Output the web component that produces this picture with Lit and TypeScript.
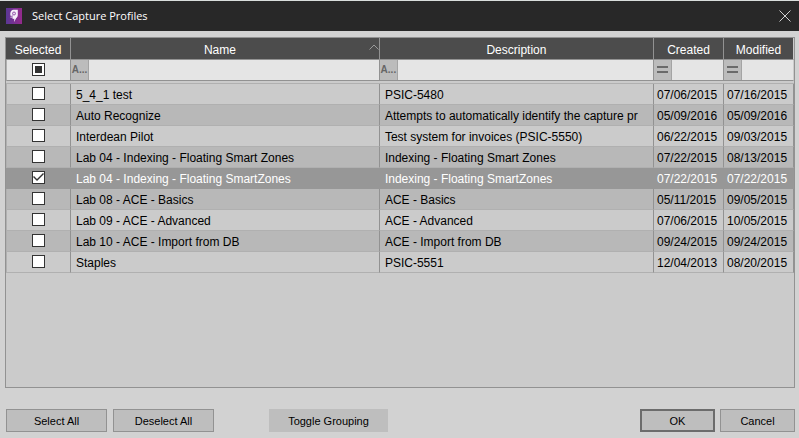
import { LitElement, html, css, svg, nothing } from "lit";
import { customElement, state } from "lit/decorators.js";
import { classMap } from "lit/directives/class-map.js";

interface Profile {
  name: string;
  description: string;
  created: string;
  modified: string;
  selected?: boolean;
}

const PROFILES: Profile[] = [
  { name: "5_4_1 test", description: "PSIC-5480", created: "07/06/2015", modified: "07/16/2015" },
  { name: "Auto Recognize", description: "Attempts to automatically identify the capture pr", created: "05/09/2016", modified: "05/09/2016" },
  { name: "Interdean Pilot", description: "Test system for invoices (PSIC-5550)", created: "06/22/2015", modified: "09/03/2015" },
  { name: "Lab 04 - Indexing - Floating Smart Zones", description: "Indexing - Floating Smart Zones", created: "07/22/2015", modified: "08/13/2015" },
  { name: "Lab 04 - Indexing - Floating SmartZones", description: "Indexing - Floating SmartZones", created: "07/22/2015", modified: "07/22/2015", selected: true },
  { name: "Lab 08 - ACE - Basics", description: "ACE - Basics", created: "05/11/2015", modified: "09/05/2015" },
  { name: "Lab 09 - ACE - Advanced", description: "ACE - Advanced", created: "07/06/2015", modified: "10/05/2015" },
  { name: "Lab 10 - ACE - Import from DB", description: "ACE - Import from DB", created: "09/24/2015", modified: "09/24/2015" },
  { name: "Staples", description: "PSIC-5551", created: "12/04/2013", modified: "08/20/2015" },
];

@customElement("app-root")
export class AppRoot extends LitElement {
  static styles = css`
    :host {
      display: flex;
      flex-direction: column;
      min-height: 100vh;
      box-sizing: border-box;
      border-top: 1px solid #d9dedc;
      background: #d2d2d2;
      color: #000;
      font: 12px/16px "Liberation Sans", Arial, sans-serif;
    }
    * {
      box-sizing: border-box;
    }
    button,
    input {
      font: inherit;
      color: inherit;
      margin: 0;
      padding: 0;
      border-radius: 0;
    }
    .titlebar {
      display: flex;
      align-items: center;
      gap: 10px;
      height: 30px;
      padding: 0 6px;
      background: #282828;
      color: #fff;
    }
    .logo {
      display: block;
      width: 16px;
      height: 16px;
    }
    .title {
      flex: 1;
      margin: 0;
      font: 11px/16px "Open Sans", "Noto Sans", sans-serif;
    }
    .close {
      display: grid;
      place-items: center;
      width: 16px;
      height: 16px;
      border: 0;
      background: none;
    }
    .close svg {
      width: 12px;
      height: 12px;
    }
    .grid {
      flex: 1;
      margin: 6px 4px 0 5px;
      border: 1px solid #929292;
      background: #cbcbcb;
    }
    table {
      width: 100%;
      table-layout: fixed;
      border-collapse: separate;
      border-spacing: 0;
    }
    .col-selected {
      width: 65px;
    }
    .col-name {
      width: 39.2%;
    }
    .col-date {
      width: 70px;
    }
    th,
    td {
      padding: 0;
      height: 21px;
      border-right: 1px solid #929292;
      border-bottom: 1px solid #b0b0b0;
      overflow: hidden;
      white-space: nowrap;
      text-align: left;
      font-weight: normal;
      vertical-align: middle;
    }
    th {
      height: 22px;
      background: #4c4c4c;
      border-bottom-color: #929292;
      color: #fff;
      text-align: center;
    }
    .head {
      display: flex;
      align-items: flex-start;
      justify-content: center;
      padding-top: 3px;
    }
    .head-label {
      flex: 1;
    }
    .sort {
      width: 10px;
      height: 10px;
    }
    th:last-child,
    .filters td:last-child {
      border-right-color: #cbcbcb;
    }
    .filters td {
      background: #e5e5e5;
      border-bottom-color: #929292;
    }
    .filter {
      display: flex;
      height: 20px;
    }
    .op {
      display: grid;
      place-items: center;
      flex: none;
      width: 18px;
      padding-bottom: 1px;
      border: 0;
      border-right: 1px solid #a4a4a4;
      background: #bcbcbc;
      color: #666;
      font: bold 10px/16px "Liberation Sans", sans-serif;
    }
    .op svg {
      width: 11px;
      height: 7px;
    }
    .filter input {
      flex: 1;
      min-width: 0;
      border: 0;
      background: none;
      outline: none;
    }
    .spacer td {
      height: 3px;
      border-right: 0;
      line-height: 0;
    }
    .row td {
      padding: 1px 0 0 5px;
      background: #cbcbcb;
    }
    .row.alt td {
      background: #b8b8b8;
    }
    .row.active td {
      background: #979797;
      border-color: #979797;
      color: #fff;
    }
    .row .date {
      padding-left: 3px;
    }
    .row .pick,
    .filters .pick {
      padding: 0 0 1px;
      border-left: 1px solid #b0b0b0;
    }
    .check {
      appearance: none;
      display: grid;
      place-items: center;
      width: 13px;
      height: 13px;
      margin: 0 auto;
      border: 1px solid #333;
      background: #fff;
    }
    .check:checked::before {
      content: "";
      width: 11px;
      height: 11px;
      background: #333;
      clip-path: polygon(0 5px, 1px 4px, 4px 7px, 10px 1px, 11px 2px, 4px 9px);
    }
    .check:indeterminate::before {
      content: "";
      width: 7px;
      height: 7px;
      background: #333;
    }
    .footer {
      display: flex;
      justify-content: space-between;
      padding: 21px 4px 6px 6px;
    }
    .tools {
      display: flex;
      gap: 6px;
    }
    .actions {
      display: flex;
      gap: 5px;
    }
    .btn {
      width: 101px;
      height: 23px;
      border: 1px solid #929292;
      background: #bebebe;
      font-size: 11px;
    }
    .toggle {
      width: 119px;
      margin-left: 49px;
      border-color: #bebebe;
    }
    .short {
      width: 75px;
    }
    .ok {
      border: 2px solid #6c6c6c;
    }
  `;

  @state() private profiles = PROFILES;

  private toggle(index: number) {
    this.profiles = this.profiles.map((p, i) => (i === index ? { ...p, selected: !p.selected } : p));
  }

  private selectAll(selected: boolean) {
    this.profiles = this.profiles.map((p) => ({ ...p, selected }));
  }

  private renderFilter(label: string, kind: "text" | "date") {
    const equals = svg`<path d="M0 1h11M0 6h11" stroke="#6a6a6a" stroke-width="2" />`;
    return html`<td>
      <div class="filter">
        <button class="op" aria-label="${label} filter operator">
          ${kind === "text" ? "A..." : html`<svg viewBox="0 0 11 7">${equals}</svg>`}
        </button>
        <input type="text" aria-label="Filter by ${label}" />
      </div>
    </td>`;
  }

  private renderRow(p: Profile, i: number) {
    const active = i === 4;
    return html`<tr class=${classMap({ row: true, alt: i % 2 === 1, active })}>
      <td class="pick">
        <input class="check" type="checkbox" aria-label=${p.name} .checked=${!!p.selected} @change=${() => this.toggle(i)} />
      </td>
      <td>${p.name}</td>
      <td>${p.description}</td>
      <td class="date">${p.created}</td>
      <td class="date">${p.modified}</td>
    </tr>`;
  }

  private renderHead(label: string, sorted = false) {
    return html`<th scope="col" aria-sort=${sorted ? "ascending" : nothing}>
      <div class="head">
        <span class="head-label">${label}</span>
        ${sorted
          ? html`<svg class="sort" viewBox="0 0 10 10"><path d="M.5 7.500 5 3l4.500 4.500" fill="none" stroke="#9a9a9a" /></svg>`
          : nothing}
      </div>
    </th>`;
  }

  render() {
    const all = this.profiles.every((p) => p.selected);
    const some = this.profiles.some((p) => p.selected);
    return html`
      <header class="titlebar">
        <svg class="logo" viewBox="0 0 16 16" aria-hidden="true">
          <defs>
            <linearGradient id="brand" x1="0" y1="0" x2="1" y2="0">
              <stop offset="0" stop-color="#5a3795" />
              <stop offset="1" stop-color="#952a8c" />
            </linearGradient>
          </defs>
          <rect width="16" height="16" fill="url(#brand)" />
          <path
            d="M7.500 1.800h4.300v5c0 1.700-.6 2.600-1.500 3.200L8 14l.3-3.200L6.500 11l.3-1.500H4.200l.8-1.400C4.400 7.500 4.100 6.500 4.300 5.200 4.600 3 5.800 1.800 7.500 1.800Z"
            fill="#f6effa"
          />
          <circle cx="8" cy="5.500" r="1.500" fill="#e6d5ec" stroke="#8a4aa4" stroke-width=".9" />
          <path d="M4 8.700 7 7.900" stroke="#8a4aa4" stroke-width=".9" />
        </svg>
        <h1 class="title">Select Capture Profiles</h1>
        <button class="close" aria-label="Close">
          <svg viewBox="0 0 12 12"><path d="M.5.5l11 11M11.500.5l-11 11" stroke="#d0d0d0" fill="none" /></svg>
        </button>
      </header>
      <main class="grid">
        <table>
          <colgroup>
            <col class="col-selected" />
            <col class="col-name" />
            <col />
            <col class="col-date" />
            <col class="col-date" />
          </colgroup>
          <thead>
            <tr>
              ${this.renderHead("Selected")} ${this.renderHead("Name", true)} ${this.renderHead("Description")}
              ${this.renderHead("Created")} ${this.renderHead("Modified")}
            </tr>
          </thead>
          <tbody>
            <tr class="filters">
              <td class="pick">
                <input
                  class="check"
                  type="checkbox"
                  aria-label="Select all profiles"
                  .checked=${all}
                  .indeterminate=${some && !all}
                  @change=${() => this.selectAll(!all)}
                />
              </td>
              ${this.renderFilter("Name", "text")} ${this.renderFilter("Description", "text")}
              ${this.renderFilter("Created", "date")} ${this.renderFilter("Modified", "date")}
            </tr>
            <tr class="spacer"><td colspan="5"></td></tr>
            ${this.profiles.map((p, i) => this.renderRow(p, i))}
          </tbody>
        </table>
      </main>
      <footer class="footer">
        <div class="tools">
          <button class="btn" @click=${() => this.selectAll(true)}>Select All</button>
          <button class="btn" @click=${() => this.selectAll(false)}>Deselect All</button>
          <button class="btn toggle">Toggle Grouping</button>
        </div>
        <div class="actions">
          <button class="btn short ok">OK</button>
          <button class="btn short">Cancel</button>
        </div>
      </footer>
    `;
  }
}
